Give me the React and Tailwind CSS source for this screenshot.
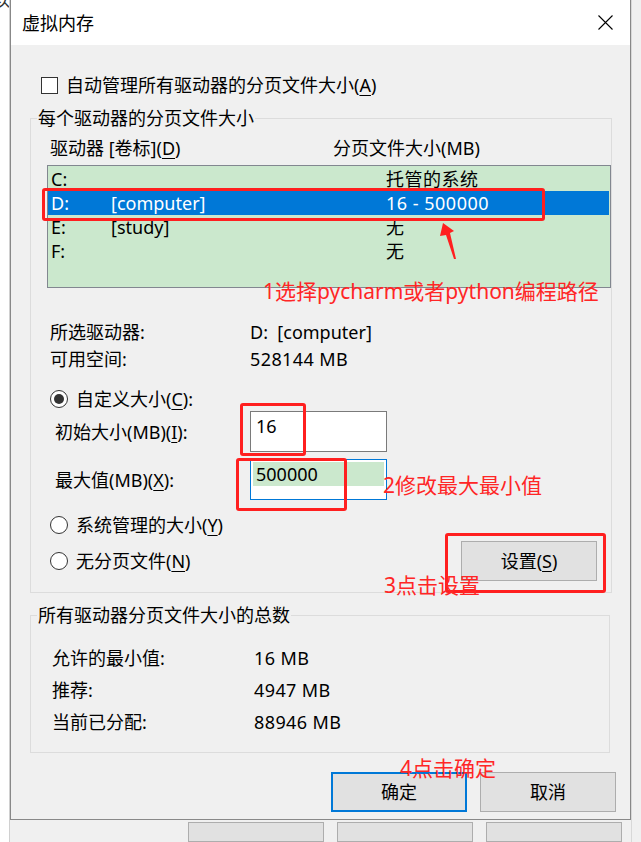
import React from "react";

// red marks drawn over the dialog
const Mark = ({ className }) => (
  <div className={`absolute border-[3px] border-[#ff1f1f] rounded-[3px] ${className}`} />
);

const Note = ({ className, children }) => (
  <div className={`absolute text-[21px] leading-[24px] text-[#ff2626] whitespace-nowrap ${className}`}>
    {children}
  </div>
);

const Radio = ({ checked, children }) => (
  <div className="flex items-center gap-[8px] leading-[24px]">
    <span className="w-[18px] h-[18px] rounded-full border border-[#333] bg-white flex items-center justify-center">
      {checked && <span className="w-[10px] h-[10px] rounded-full bg-[#333]" />}
    </span>
    <span>{children}</span>
  </div>
);

const Key = ({ children }) => <u className="underline-offset-[3px]">{children}</u>;

const drives = [
  { letter: "C:", label: "", size: "托管的系统" },
  { letter: "D:", label: "[computer]", size: "16 - 500000", selected: true },
  { letter: "E:", label: "[study]", size: "无" },
  { letter: "F:", label: "", size: "无" },
];

const totals = [
  ["允许的最小值:", "16 MB"],
  ["推荐:", "4947 MB"],
  ["当前已分配:", "88946 MB"],
];

export default function App() {
  return (
    <div className="relative w-[641px] h-[842px] overflow-hidden flex bg-[#f0f0f0] text-black text-[18px] font-['Noto_Sans','Noto_Sans_CJK_SC',sans-serif]">
      {/* desktop behind, left edge */}
      <div className="w-[10px] bg-white border-r border-[#d0d0d0] overflow-hidden">
        <div className="-mt-[12px] -ml-[8px] text-[18px] leading-[24px] text-[#333]">以</div>
      </div>

      <div className="w-[621px] flex flex-col">
        {/* dialog */}
        <div className="h-[832px] flex flex-col border-x border-b border-[#888] bg-[#f0f0f0]">
          <div className="h-[45px] bg-white flex items-center justify-between pl-[11px]">
            <span className="leading-[24px]">虚拟内存</span>
            <span className="w-[50px] h-[45px] flex items-center justify-center">
              <svg width="15" height="15" viewBox="0 0 15 15">
                <path d="M0.5 0.5 L14.5 14.5 M14.5 0.5 L0.5 14.5" stroke="#000" strokeWidth="1.1" fill="none" />
              </svg>
            </span>
          </div>

          <div className="flex flex-col">
            <div className="mt-[29px] ml-[30px] h-[22px] flex items-center gap-[8px]">
              <span className="w-[17px] h-[17px] border border-[#333] bg-white" />
              <span className="leading-[24px]">
                自动管理所有驱动器的分页文件大小(<Key>A</Key>)
              </span>
            </div>

            <fieldset className="mt-[10px] ml-[19px] w-[580px] h-[487px] border border-[#dcdcdc]">
              <legend className="ml-[6px] px-[1px] leading-[24px]">每个驱动器的分页文件大小</legend>

              <div className="mt-[6px] pl-[19px] flex leading-[24px]">
                <span className="w-[283px]">
                  驱动器 [卷标](<Key>D</Key>)
                </span>
                <span>分页文件大小(MB)</span>
              </div>

              <div className="mt-[5px] ml-[16px] w-[564px] h-[123px] border border-[#828790] bg-[#cbe8cd] pt-[1px]">
                {drives.map((d) => (
                  <div
                    key={d.letter}
                    className={`h-[24px] leading-[24px] flex mr-[1px] ${d.selected ? "bg-[#0078d7] text-white" : ""}`}
                  >
                    <span className="w-[63px] pl-[3px]">{d.letter}</span>
                    <span className="w-[275px]">{d.label}</span>
                    <span className="tracking-[0.5px]">{d.size}</span>
                  </div>
                ))}
              </div>

              <div className="mt-[31px] pl-[19px]">
                <div className="flex h-[27px] leading-[27px]">
                  <span className="w-[200px]">所选驱动器:</span>
                  <span>D:&nbsp;&nbsp;[computer]</span>
                </div>
                <div className="flex h-[27px] leading-[27px]">
                  <span className="w-[200px]">可用空间:</span>
                  <span className="tracking-[0.4px]">528144 MB</span>
                </div>
              </div>

              <div className="mt-[14px] pl-[19px]">
                <Radio checked>
                  自定义大小(<Key>C</Key>):
                </Radio>
              </div>

              <div className="pl-[24px] flex items-center h-[41px]">
                <span className="w-[195px] leading-[24px]">
                  初始大小(MB)(<Key>I</Key>):
                </span>
                <div className="w-[137px] h-[41px] border border-[#7a7a7a] bg-white pl-[5px] pt-[2px] leading-[24px]">16</div>
              </div>

              <div className="mt-[7px] pl-[24px] flex items-center h-[41px]">
                <span className="w-[195px] leading-[24px]">
                  最大值(MB)(<Key>X</Key>):
                </span>
                <div className="w-[137px] h-[41px] border border-[#0078d7] bg-white pt-[2px] px-[2px]">
                  <div className="h-[24px] leading-[24px] bg-[#cbe8cd] pl-[3px]">500000</div>
                </div>
              </div>

              <div className="mt-[13px] pl-[19px]">
                <Radio>
                  系统管理的大小(<Key>Y</Key>)
                </Radio>
              </div>

              <div className="mt-[4px] pl-[19px] pr-[14px] h-[40px] flex items-center justify-between">
                <Radio>
                  无分页文件(<Key>N</Key>)
                </Radio>
                <div className="w-[136px] h-[40px] bg-[#e1e1e1] border border-[#adadad] flex items-center justify-center leading-[24px]">
                  设置(<Key>S</Key>)
                </div>
              </div>
            </fieldset>

            <fieldset className="mt-[10px] ml-[19px] w-[580px] h-[150px] border border-[#dcdcdc]">
              <legend className="ml-[6px] px-[1px] leading-[24px]">所有驱动器分页文件大小的总数</legend>
              <div className="mt-[15px] pl-[21px]">
                {totals.map(([k, v]) => (
                  <div key={k} className="flex h-[32px] items-center leading-[24px]">
                    <span className="w-[202px]">{k}</span>
                    <span className="tracking-[0.4px]">{v}</span>
                  </div>
                ))}
              </div>
            </fieldset>

            <div className="mt-[19px] ml-[320px] flex gap-[13px]">
              <div className="w-[136px] h-[40px] bg-[#e1e1e1] border-2 border-[#0078d7] flex items-center justify-center leading-[24px]">
                确定
              </div>
              <div className="w-[136px] h-[40px] bg-[#e1e1e1] border border-[#adadad] flex items-center justify-center leading-[24px]">
                取消
              </div>
            </div>
          </div>
        </div>

        {/* buttons of the window behind */}
        <div className="mt-[2px] ml-[178px] flex gap-[13px]">
          <div className="w-[136px] h-[20px] bg-[#e1e1e1] border border-[#adadad]" />
          <div className="w-[136px] h-[20px] bg-[#e1e1e1] border border-[#adadad]" />
          <div className="w-[136px] h-[20px] bg-[#e1e1e1] border border-[#adadad]" />
        </div>
      </div>

      <div className="flex-1 bg-[#f0f0f0] border-l border-[#d8d8d8]" />

      {/* annotations */}
      <Mark className="left-[42px] top-[188px] w-[503px] h-[33px]" />
      <svg className="absolute left-[436px] top-[218px]" width="24" height="45" viewBox="0 0 24 45">
        <polygon points="7,5 18,13 14,15 20,41 18,41 10,17 4,18" fill="#ff1f1f" />
      </svg>
      <Note className="left-[263px] top-[279px]">1选择pycharm或者python编程路径</Note>

      <Mark className="left-[240px] top-[403px] w-[66px] h-[53px]" />
      <Mark className="left-[236px] top-[458px] w-[111px] h-[53px]" />
      <Note className="left-[383px] top-[473px]">2修改最大最小值</Note>

      <Mark className="left-[445px] top-[533px] w-[161px] h-[60px]" />
      <Note className="left-[384px] top-[573px]">3点击设置</Note>

      <Note className="left-[400px] top-[756px]">4点击确定</Note>
    </div>
  );
}
